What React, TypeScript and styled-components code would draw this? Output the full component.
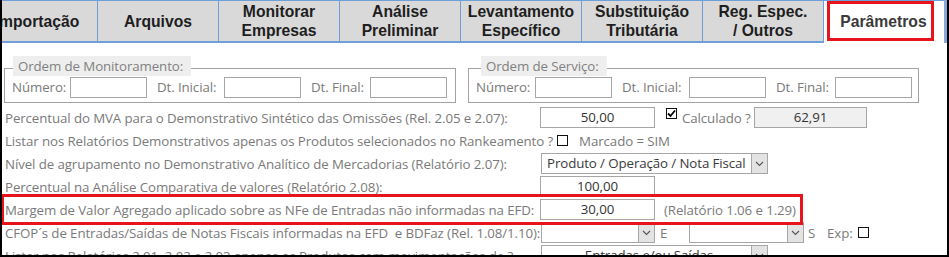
import React from "react";
import styled, { createGlobalStyle, css } from "styled-components";

const GlobalStyle = createGlobalStyle`
  html, body {
    margin: 0;
    padding: 0;
    background: #fff;
  }
  * {
    box-sizing: border-box;
  }
`;

const Frame = styled.div`
  width: 949px;
  height: 257px;
  overflow: hidden;
  border-left: 2px solid #000;
  border-right: 2px solid #000;
  border-bottom: 2px solid #000;
  background: #fff;
  font-family: "Open Sans", "Noto Sans", sans-serif;
`;

const TabStrip = styled.div`
  display: flex;
  height: 43px;
  margin-left: -26px;
  background: #86aad8;
`;

const Tab = styled.div<{ $active?: boolean }>`
  flex: 0 0 121px;
  height: 43px;
  display: flex;
  align-items: center;
  justify-content: center;
  text-align: center;
  border-left: 1px solid #6f9fd8;
  border-top: 1px solid #6f9fd8;
  border-bottom: 2px solid #6f9fd8;
  background: #d9d9d9;
  font-family: "Liberation Sans", Arial, sans-serif;
  font-weight: bold;
  font-size: 15.7px;
  line-height: 19px;
  color: #1e1e1e;

  ${({ $active }) =>
    $active &&
    css`
      align-items: flex-start;
      justify-content: flex-start;
      border-bottom: none;
      background: #fff;
      color: #3a3a3a;
    `}
`;

const Highlight = styled.div`
  width: 107px;
  height: 40px;
  margin-left: 3px;
  border: 3px solid #e8141c;
  display: flex;
  align-items: center;
  justify-content: center;
  padding-left: 6px;
`;

const Body = styled.div`
  padding: 13px 0 0 2px;
  color: #7a7a7a;
  font-size: 13.3px;
  letter-spacing: -0.1px;
`;

const GroupRow = styled.div`
  display: flex;
  gap: 12px;
`;

const Group = styled.fieldset<{ $w: number }>`
  margin: 0;
  width: ${({ $w }) => $w}px;
  min-width: 0;
  border: 1px solid #a3a3a3;
  padding: 0 0 4px 7px;
`;

const Legend = styled.legend<{ $offset: number }>`
  margin-left: ${({ $offset }) => $offset}px;
  padding: 0 8px 4px 5px;
  height: 24px;
  line-height: 20px;
  color: #808080;
  background: linear-gradient(#eeeeee, #eeeeee) top / 100% 20px no-repeat;
`;

const Fields = styled.div<{ $cols: string }>`
  display: grid;
  grid-template-columns: ${({ $cols }) => $cols};
  align-items: center;
  margin-top: -3px;
`;

const FieldLabel = styled.span<{ $pad?: number }>`
  padding-left: ${({ $pad }) => $pad ?? 0}px;
  white-space: nowrap;
  line-height: 21px;
`;

const TextBox = styled.div<{ $w: number; $readOnly?: boolean }>`
  width: ${({ $w }) => $w}px;
  height: 21px;
  border: 1px solid #a6a6a6;
  background: ${({ $readOnly }) => ($readOnly ? "#f0f0f0" : "#fff")};
  color: #333;
  text-align: center;
  line-height: 19px;
  flex: 0 0 auto;
`;

const Rows = styled.div`
  margin-top: 3px;
  padding-left: 1px;
`;

const Row = styled.div<{ $marked?: boolean }>`
  display: flex;
  align-items: center;
  height: 23px;
  white-space: pre;

  ${({ $marked }) =>
    $marked &&
    css`
      width: 794px;
      outline: 3px solid #e8141c;
      outline-offset: 1px;
    `}
`;

const Label = styled.span<{ $w?: number }>`
  flex: 0 0 auto;
  width: ${({ $w }) => ($w ? `${$w}px` : "auto")};
  white-space: pre;
`;

const Note = styled.span<{ $ml?: number; $w?: number }>`
  flex: 0 0 auto;
  margin-left: ${({ $ml }) => $ml ?? 0}px;
  width: ${({ $w }) => ($w ? `${$w}px` : "auto")};
`;

const Box = styled.span<{ $ml?: number; $top?: boolean }>`
  flex: 0 0 auto;
  width: 11px;
  height: 11px;
  margin-left: ${({ $ml }) => $ml ?? 0}px;
  border: 1px solid #111;
  background: #fff;
  display: flex;
  align-items: center;
  justify-content: center;
  ${({ $top }) =>
    $top &&
    css`
      align-self: flex-start;
      margin-top: 2px;
    `}
`;

const SelectBox = styled.div<{ $w: number; $ml?: number }>`
  flex: 0 0 auto;
  width: ${({ $w }) => $w}px;
  height: 21px;
  margin-left: ${({ $ml }) => $ml ?? 1}px;
  border: 1px solid #a6a6a6;
  background: #fff;
  display: flex;
`;

const SelectText = styled.span<{ $center?: boolean }>`
  flex: 1;
  padding-left: 5px;
  line-height: 19px;
  color: #3a3a3a;
  text-align: ${({ $center }) => ($center ? "center" : "left")};
  overflow: hidden;
`;

const Arrow = styled.span`
  flex: 0 0 16px;
  background: #e3e3e3;
  border-left: 1px solid #a6a6a6;
  display: flex;
  align-items: center;
  justify-content: center;
`;

const Check = ({ checked, ml, top }: { checked?: boolean; ml?: number; top?: boolean }) => (
  <Box $ml={ml} $top={top}>
    {checked && (
      <svg width="9" height="9" viewBox="0 0 9 9">
        <path d="M1 4.5 L3.5 7 L8 1.5" fill="none" stroke="#000" strokeWidth="1.8" />
      </svg>
    )}
  </Box>
);

const Select = ({ w, text, center, ml }: { w: number; text?: string; center?: boolean; ml?: number }) => (
  <SelectBox $w={w} $ml={ml}>
    <SelectText $center={center}>{text}</SelectText>
    <Arrow>
      <svg width="9" height="6" viewBox="0 0 9 6">
        <path d="M1 1 L4.5 4.5 L8 1" fill="none" stroke="#555" strokeWidth="1.1" />
      </svg>
    </Arrow>
  </SelectBox>
);

const tabs: { lines: string[]; active?: boolean }[] = [
  { lines: ["Importação"] },
  { lines: ["Arquivos"] },
  { lines: ["Monitorar", "Empresas"] },
  { lines: ["Análise", "Preliminar"] },
  { lines: ["Levantamento", "Específico"] },
  { lines: ["Substituição", "Tributária"] },
  { lines: ["Reg. Espec.", "/ Outros"] },
  { lines: ["Parâmetros"], active: true },
];

const groups = [
  { title: "Ordem de Monitoramento:", w: 452, offset: 1, cols: "58px 77px 77px 77px 69px 77px" },
  { title: "Ordem de Serviço:", w: 451, offset: 5, cols: "59px 77px 77px 77px 69px 77px" },
];

export default function App() {
  return (
    <>
      <GlobalStyle />
      <Frame>
        <TabStrip>
          {tabs.map((t, i) => (
            <Tab key={i} $active={t.active}>
              {t.active ? (
                <Highlight>{t.lines[0]}</Highlight>
              ) : (
                <div>
                  {t.lines.map((l) => (
                    <div key={l}>{l}</div>
                  ))}
                </div>
              )}
            </Tab>
          ))}
        </TabStrip>

        <Body>
          <GroupRow>
            {groups.map((g) => (
              <Group key={g.title} $w={g.w}>
                <Legend $offset={g.offset}>{g.title}</Legend>
                <Fields $cols={g.cols}>
                  <FieldLabel>Número:</FieldLabel>
                  <TextBox $w={77} />
                  <FieldLabel $pad={10}>Dt. Inicial:</FieldLabel>
                  <TextBox $w={77} />
                  <FieldLabel $pad={10}>Dt. Final:</FieldLabel>
                  <TextBox $w={77} />
                </Fields>
              </Group>
            ))}
          </GroupRow>

          <Rows>
            <Row>
              <Label $w={535}>Percentual do MVA para o Demonstrativo Sintético das Omissões (Rel. 2.05 e 2.07):</Label>
              <TextBox $w={115}>50,00</TextBox>
              <Check checked ml={11} top />
              <Note $ml={5} $w={72}>Calculado ?</Note>
              <TextBox $w={113} $readOnly>62,91</TextBox>
            </Row>
            <Row>
              <Label>Listar nos Relatórios Demonstrativos apenas os Produtos selecionados no Rankeamento ?</Label>
              <Check ml={4} />
              <Note $ml={11}>Marcado = SIM</Note>
            </Row>
            <Row>
              <Label $w={535}>Nível de agrupamento no Demonstrativo Analítico de Mercadorias (Relatório 2.07):</Label>
              <Select w={227} text="Produto / Operação / Nota Fiscal" />
            </Row>
            <Row>
              <Label $w={535}>Percentual na Análise Comparativa de valores (Relatório 2.08):</Label>
              <TextBox $w={115}>100,00</TextBox>
            </Row>
            <Row $marked>
              <Label $w={535}>Margem de Valor Agregado aplicado sobre as NFe de Entradas não informadas na EFD:</Label>
              <TextBox $w={115}>30,00</TextBox>
              <Note $ml={9}>(Relatório 1.06 e 1.29)</Note>
            </Row>
            <Row>
              <Label $w={535}>CFOP´s de Entradas/Saídas de Notas Fiscais informadas na EFD  e BDFaz (Rel. 1.08/1.10):</Label>
              <Select w={114} />
              <Note $ml={5} $w={29}>E</Note>
              <Select w={115} ml={0} />
              <Note $ml={4} $w={19}>S</Note>
              <Note $w={31}>Exp:</Note>
              <Check />
            </Row>
            <Row>
              <Label $w={535}>Listar nos Relatórios 2.01, 2.02 e 2.03 apenas os Produtos com movimentações de ?</Label>
              <Select w={227} text="Entradas e/ou Saídas" center />
            </Row>
          </Rows>
        </Body>
      </Frame>
    </>
  );
}
